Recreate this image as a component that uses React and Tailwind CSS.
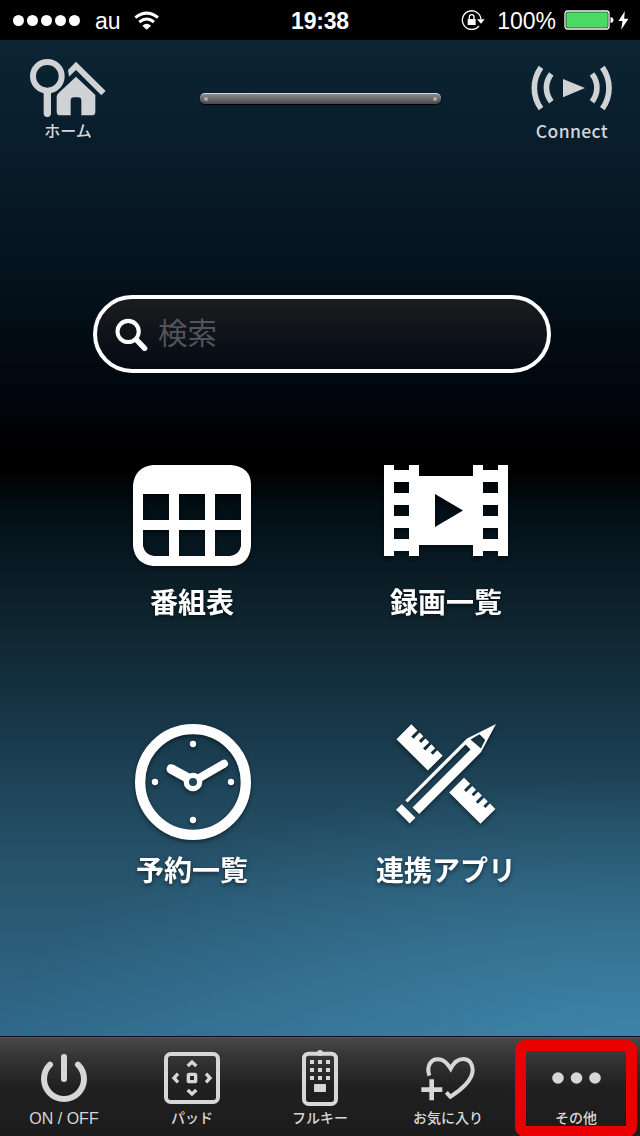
// Remote control app - home screen with shortcuts and bottom tab bar
const WifiIcon = () => (
  <svg width="25" height="19" viewBox="402 31 75 57" fill="none" stroke="white" strokeWidth="9">
    <path d="M406 51 Q440 24 474 51" />
    <path d="M418 64 Q440 46 462 64" />
    <path d="M427 75 Q440 64 453 75 L440 87 Z" fill="white" stroke="none" />
  </svg>
);

const RotationLockIcon = () => (
  <svg width="24" height="20" viewBox="421 30 72 60" fill="none" stroke="white">
    <path d="M475 78 A28 28 0 1 1 481 58" strokeWidth="4" />
    <path d="M469 58 H492 L481 71 Z" fill="white" stroke="none" />
    <rect x="441" y="57" width="24" height="18" rx="1" fill="white" stroke="none" />
    <path d="M446 58 V51 Q446 44 453 44 Q460 44 460 51 V58" strokeWidth="4" />
  </svg>
);

const BatteryIcon = () => (
  <svg width="50" height="20" viewBox="0 0 50 20">
    <rect x="1" y="1" width="44" height="18" rx="2.500" fill="none" stroke="white" strokeWidth="1.300" />
    <rect x="2.300" y="2.300" width="41.500" height="15.500" rx="1.300" fill="#4cd964" />
    <path d="M46.500 7 Q49.500 7.500 49.500 10 Q49.500 12.500 46.500 13 Z" fill="white" />
  </svg>
);

const BoltIcon = () => (
  <svg width="11" height="19" viewBox="894 31 32 57" fill="white">
    <path d="M914 31 L895 61 H907 L903 87 L925 54 H912 Z" />
  </svg>
);

const HomeIcon = () => (
  <svg width="76" height="58" viewBox="90 177 228 174" fill="#cfd3d6">
    <circle cx="142" cy="229" r="43" fill="none" stroke="#cfd3d6" strokeWidth="18" />
    <path d="M142 276 V340" stroke="#cfd3d6" strokeWidth="22" strokeLinecap="round" />
    <path d="M204 210 L228 185 L317 273 L304 286 L228 210 L207 230 Z" />
    <path d="M228 230 L286 285 V335 Q286 346 275 346 H244 V302 Q244 292 234 292 H222 Q212 292 212 302 V346 H181 Q170 346 170 335 V291 Q170 285 175 280 Z" />
  </svg>
);

const ConnectIcon = () => (
  <svg width="82" height="46" viewBox="634 195 246 138" fill="none" stroke="#cfd3d6" strokeWidth="17">
    <path d="M664 202 A106 106 0 0 0 664 326" />
    <path d="M695 222 A66 66 0 0 0 695 305" />
    <path d="M817 222 A66 66 0 0 1 817 305" />
    <path d="M848 202 A106 106 0 0 1 848 326" />
    <path d="M730 237 L796 264 L730 292 Z" fill="#cfd3d6" stroke="none" />
  </svg>
);

const SearchIcon = () => (
  <svg width="33" height="33" viewBox="105 112 98 98" fill="none" stroke="white">
    <circle cx="144" cy="152" r="31.500" strokeWidth="12" />
    <path d="M169 177 L193 202" strokeWidth="16" strokeLinecap="round" />
  </svg>
);

const GuideIcon = () => (
  <svg width="118" height="101" viewBox="0 0 118 101">
    <path
      fill="white"
      fillRule="evenodd"
      d="M20 0 H98 Q118 2 118 20 V81 Q116 101 98 101 H20 Q2 99 0 81 V20 Q2 2 20 0 Z
        M10 29 V55 H36 V29 Z M46 29 V55 H72 V29 Z M82 29 V55 H108 V29 Z
        M10 65 V81 Q12 90 21 91 H36 V65 Z M46 65 V91 H72 V65 Z M82 65 V91 H97 Q106 90 108 81 V65 Z"
    />
  </svg>
);

const FilmIcon = () => (
  <svg width="124" height="91" viewBox="0 0 124 91">
    <path
      fill="white"
      fillRule="evenodd"
      d="M0 0 H10 V5 H25 V0 H35 V11 H89 V0 H99 V5 H114 V0 H124 V91 H114 V86 H99 V91 H89 V80 H35 V91 H25 V86 H10 V91 H0 Z
        M10 17 V28 H25 V17 Z M10 40 V51 H25 V40 Z M10 63 V74 H25 V63 Z
        M99 17 V28 H114 V17 Z M99 40 V51 H114 V40 Z M99 63 V74 H114 V63 Z
        M51 29 V62 L79 45.500 Z"
    />
  </svg>
);

const ClockIcon = () => (
  <svg className="ml-0.5" width="116" height="116" viewBox="45 42 348 348" fill="white">
    <circle cx="219" cy="216" r="158.500" fill="none" stroke="white" strokeWidth="31" />
    <circle cx="219" cy="102" r="9.500" />
    <circle cx="219" cy="330" r="9.500" />
    <circle cx="105" cy="216" r="9.500" />
    <circle cx="333" cy="216" r="9.500" />
    <path d="M154 177 L199 202" stroke="white" strokeWidth="29" strokeLinecap="round" />
    <path d="M312 161 L238 204" stroke="white" strokeWidth="24" strokeLinecap="round" />
    <circle cx="219" cy="216" r="20" fill="#1e4458" stroke="white" strokeWidth="16" />
  </svg>
);

// Half of the ruler, with the notches cut into its upper edge
const RULER = 'M0 0 H26 V26 H35 V0 H51 V19 H60 V0 H76 V26 H85 V0 H101 V19 H110 V0 H133 V63 H0 Z';

const ToolsIcon = () => (
  <svg width="100" height="100" viewBox="93 42 300 300" fill="white">
    <path d={RULER} transform="translate(139 43) rotate(45)" />
    <path d={RULER} transform="translate(297 203) rotate(45)" />
    <g transform="translate(393 42) rotate(135)">
      <path
        fillRule="evenodd"
        d="M0 0 L92 31 H354 V21 H108 V0 H354 V-28 H92 Z M57 13 L87 21 L84 -20 L57 -11 Z"
      />
      <rect x="370" y="-28" width="24" height="58" />
    </g>
  </svg>
);

const PowerIcon = () => (
  <svg width="48" height="48" viewBox="120 87 144 144" fill="none" stroke="#d8d6d7" strokeWidth="18" strokeLinecap="round">
    <path d="M150 119 A60 60 0 1 0 234 119" />
    <path d="M192 96 V162" />
  </svg>
);

const PadIcon = () => (
  <svg width="56" height="52" viewBox="492 81 168 156" fill="none" stroke="#d8d6d7" strokeWidth="10">
    <rect x="498" y="87" width="156" height="144" rx="14" strokeWidth="12" />
    <rect x="565" y="148" width="22" height="22" rx="3" />
    <path d="M563 123 L576 111 L589 123" />
    <path d="M563 195 L576 207 L589 195" />
    <path d="M534 146 L522 159 L534 172" />
    <path d="M618 146 L630 159 L618 172" />
  </svg>
);

const KeypadIcon = () => (
  <svg width="36" height="56" viewBox="216 72 108 168" fill="#d8d6d7">
    <circle cx="270" cy="81" r="9" />
    <rect x="222" y="83" width="96" height="151" rx="14" fill="none" stroke="#d8d6d7" strokeWidth="12" />
    {[102, 126, 150].map((y) =>
      [240, 264, 288].map((x) => <rect key={`${x}-${y}`} x={x} y={y} width="12" height="12" />)
    )}
    <rect x="252" y="174" width="36" height="24" rx="3" />
  </svg>
);

const FavoriteIcon = () => (
  <svg width="54" height="45" viewBox="572 92 162 135" fill="none" stroke="#d8d6d7" strokeWidth="12">
    <path d="M597 151 C587 120 603 102 622 102 C642 102 652 116 661 130 C668 116 680 101 699 101 C718 101 727 117 727 134 C727 164 692 195 660 214 L648 201" />
    <path d="M573 193 H636 M604 162 V225" strokeWidth="14" />
  </svg>
);

const MoreIcon = () => (
  <svg width="49" height="12" viewBox="0 0 49 12" fill="#d8d6d7">
    <circle cx="6" cy="6" r="5.800" />
    <circle cx="24.500" cy="6" r="5.800" />
    <circle cx="43" cy="6" r="5.800" />
  </svg>
);

const StatusBar = () => (
  <div className="grid h-10 grid-cols-3 items-center bg-black font-['Liberation_Sans',sans-serif] text-[23px] leading-9 text-white">
    <div className="flex items-center pl-[13px]">
      <div className="flex gap-[3px]">
        {[0, 1, 2, 3, 4].map((i) => (
          <span key={i} className="h-[11px] w-[11px] rounded-full bg-white" />
        ))}
      </div>
      <span className="mr-[13px] ml-[15px] pt-0.5">au</span>
      <WifiIcon />
    </div>
    <div className="pt-0.5 text-center text-[23px] font-bold tracking-[-0.2px]">19:38</div>
    <div className="flex items-center justify-end pr-[11px]">
      <RotationLockIcon />
      <span className="mr-2 ml-3 pt-0.5">100%</span>
      <BatteryIcon />
      <span className="ml-1"><BoltIcon /></span>
    </div>
  </div>
);

const HeaderButton = ({ icon, label, labelClass }) => (
  <button className="flex w-[136px] flex-col items-center text-[#d3d6d8]">
    <span className="flex h-[60px] items-center">{icon}</span>
    <span className={`font-medium ${labelClass}`}>{label}</span>
  </button>
);

const Header = () => (
  <header className="flex h-[110px] pt-[18px]">
    <HeaderButton icon={<HomeIcon />} label="ホーム" labelClass="text-base leading-[25px]" />
    <div className="flex flex-1 justify-center pt-[35px]">
      <div className="flex h-[11px] w-[241px] items-center justify-between rounded-[5px] border-t border-[#d5d8da] bg-linear-to-b from-[#8b8b8b] to-[#484848] px-1 shadow-[0_1px_1px_#000]">
        <span className="h-1 w-1 rounded-full bg-[#aaa]" />
        <span className="h-1 w-1 rounded-full bg-[#aaa]" />
      </div>
    </div>
    <HeaderButton icon={<ConnectIcon />} label="Connect" labelClass="text-[17.500px] leading-[26px] tracking-[0.4px]" />
  </header>
);

const Shortcut = ({ icon, label, iconClass }) => (
  <button className="flex flex-col items-center text-white drop-shadow-[0_2px_2px_rgba(0,0,0,0.5)]">
    <span className={iconClass}>{icon}</span>
    <span className="text-[28px] leading-10 font-bold">{label}</span>
  </button>
);

const TABS = [
  { label: 'ON / OFF', icon: <PowerIcon />, labelClass: "font-['Liberation_Sans',sans-serif] text-base leading-[22px]" },
  { label: 'パッド', icon: <PadIcon />, labelClass: 'text-sm leading-[19px]' },
  { label: 'フルキー', icon: <KeypadIcon />, labelClass: 'text-sm leading-[19px]' },
  { label: 'お気に入り', icon: <FavoriteIcon />, labelClass: 'text-sm leading-[19px]' },
  { label: 'その他', icon: <MoreIcon />, labelClass: 'text-sm leading-[19px]', highlighted: true },
];

const TabBar = () => (
  <nav className="grid h-[100px] grid-cols-5 border-t border-[#0a1015] bg-[linear-gradient(#666_0px,#484848_1px,#353535_20px,#202020_50px,#1c1c1c_100%)]">
    {TABS.map((tab) => (
      <button key={tab.label} className="relative flex flex-col items-center pt-[11px] text-[#d8d6d7]">
        <span className="flex h-[60px] items-center">{tab.icon}</span>
        <span className={`font-medium ${tab.labelClass}`}>{tab.label}</span>
        {tab.highlighted && (
          <span className="absolute top-[3px] right-[3px] -bottom-px left-[3px] rounded-[10px] border-[11px] border-[#eb0000]" />
        )}
      </button>
    ))}
  </nav>
);

export default function App() {
  return (
    <div className="flex h-[1136px] w-[640px] flex-col overflow-hidden bg-black font-['Noto_Sans_CJK_JP',sans-serif]">
      <StatusBar />
      <main className="flex-1 bg-[radial-gradient(ellipse_640px_260px_at_100%_100%,rgba(75,160,200,0.5),transparent),linear-gradient(#0c2433_0px,#081c29_120px,#04121c_240px,#01060e_350px,#000_410px,#000_430px,#020d14_465px,#091c26_530px,#102833_600px,#173648_680px,#20475c_760px,#28566f_850px,#30698a_996px)]">
        <Header />
        <div className="mt-[145px] ml-[93px] flex h-[78px] w-[458px] items-center rounded-full border-4 border-white bg-linear-to-b from-[#1b1c1f] to-[#050b14] pl-[18px]">
          <SearchIcon />
          <input
            className="mb-1.5 ml-[10px] w-80 bg-transparent text-[29.500px] leading-10 outline-none placeholder:text-[#50545b]"
            placeholder="検索"
          />
        </div>
        <div className="mt-[92px] ml-[65px] grid w-[508px] grid-cols-2 gap-y-[103px]">
          <Shortcut icon={<GuideIcon />} label="番組表" iconClass="h-[116px]" />
          <Shortcut icon={<FilmIcon />} label="録画一覧" iconClass="h-[116px]" />
          <Shortcut icon={<ClockIcon />} label="予約一覧" iconClass="h-[125px]" />
          <Shortcut icon={<ToolsIcon />} label="連携アプリ" iconClass="h-[125px]" />
        </div>
      </main>
      <TabBar />
    </div>
  );
}
